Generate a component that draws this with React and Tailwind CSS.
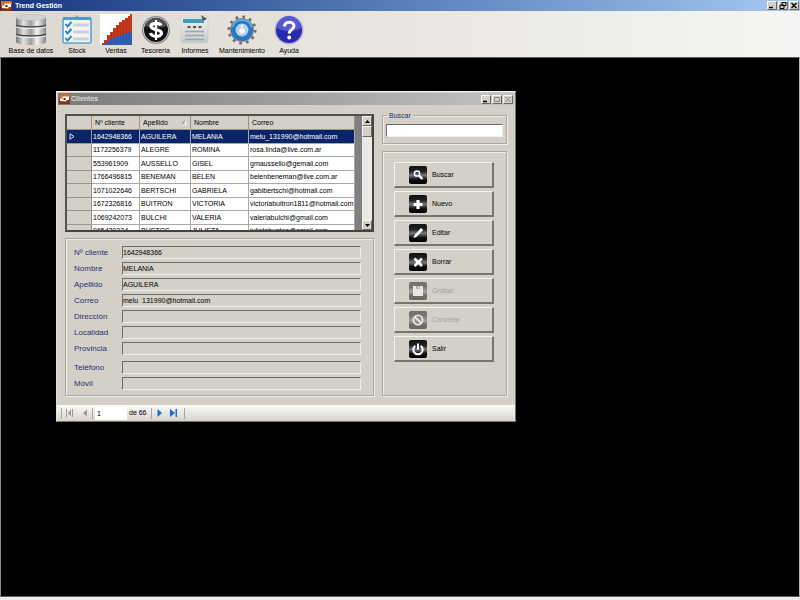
import React from "react";

const clients = [
  ["1642948366", "AGUILERA", "MELANIA", "melu_131990@hotmail.com"],
  ["1172256379", "ALEGRE", "ROMINA", "rosa.linda@live.com.ar"],
  ["553961909", "AUSSELLO", "GISEL", "gmaussello@gemail.com"],
  ["1766496815", "BENEMAN", "BELEN", "belenbeneman@live.com.ar"],
  ["1071022646", "BERTSCHI", "GABRIELA", "gabibertschi@hotmail.com"],
  ["1672326816", "BUITRON", "VICTORIA", "victoriabuitron1811@hotmail.com"],
  ["1069242073", "BULCHI", "VALERIA", "valeriabulchi@gmail.com"],
  ["965430334", "BUSTOS", "JULIETA", "julietabustos@gmail.com"],
];

const fields = [
  ["Nº cliente", "1642948366"],
  ["Nombre", "MELANIA"],
  ["Apellido", "AGUILERA"],
  ["Correo", "melu_131990@hotmail.com"],
  ["Dirección", ""],
  ["Localidad", ""],
  ["Provincia", ""],
  ["Teléfono", ""],
  ["Móvil", ""],
];

const raised = "border border-t-[#f8f7f4] border-l-[#f8f7f4] border-r-[#6b6862] border-b-[#6b6862]";

function AppLogo() {
  return (
    <svg viewBox="0 0 11 10" className="h-[10px] w-[11px] shrink-0">
      <rect width="11" height="10" fill="#d0702a" />
      <path d="M0 10V5l11-2v7z" fill="#8a3510" />
      <path d="M1 7V4.500h2.500V2.500H10v3.500H7.500v1.500z" fill="#fff" />
      <rect x="4.500" y="4" width="2" height="2" fill="#5e2208" />
    </svg>
  );
}

function CaptionButton({ label, dim, children }) {
  return (
    <button
      type="button"
      aria-label={label}
      className={`flex h-[9px] w-[10px] items-center justify-center bg-[#d4d0c8] ${raised} ${dim ? "text-[#8b8883]" : "text-black"}`}
    >
      <svg viewBox="0 0 8 7" className="h-[7px] w-[8px] shrink-0" fill="none" stroke="currentColor">
        {children}
      </svg>
    </button>
  );
}

function DatabaseIcon() {
  return (
    <svg viewBox="0 0 32 32" className="h-8 w-8">
      <defs>
        <linearGradient id="metal">
          <stop offset="0" stopColor="#777" />
          <stop offset=".25" stopColor="#e2e2e2" />
          <stop offset=".5" stopColor="#9c9c9c" />
          <stop offset=".7" stopColor="#f4f4f4" />
          <stop offset="1" stopColor="#858585" />
        </linearGradient>
      </defs>
      <path d="M1 3v25c0 4 30 4 30 0V3z" fill="url(#metal)" />
      <ellipse cx="16" cy="3.500" rx="15" ry="3" fill="#d2d2d2" stroke="#b5b5b5" strokeWidth=".5" />
      <path d="M1 11c2 2.500 28 2.500 30 0M1 20c2 2.500 28 2.500 30 0" fill="none" stroke="#444" strokeWidth="1.300" />
      <path d="M1 12.500c2 2.500 28 2.500 30 0M1 21.500c2 2.500 28 2.500 30 0" fill="none" stroke="#f5f5f5" strokeWidth="1" />
    </svg>
  );
}

function StockIcon() {
  return (
    <svg viewBox="0 0 32 32" className="h-8 w-8">
      <path d="M14 3l2-2 2 2z" fill="#aaa" />
      <rect x="2" y="4" width="28" height="25" rx="1.500" fill="#f1f5f7" stroke="#57a3cf" strokeWidth="1.600" />
      <rect x="2" y="3" width="28" height="3" fill="#4d9cca" />
      <path d="M12 11h16M12 18h16M12 25h16" stroke="#cfd2d4" strokeWidth="3" />
      <path d="M4.500 10l2 2.500 4-4.500M4.500 17l2 2.500 4-4.500M4.500 24l2 2.500 4-4.500" fill="none" stroke="#2488bd" strokeWidth="1.900" />
    </svg>
  );
}

function SalesIcon() {
  return (
    <svg viewBox="0 0 32 32" className="h-8 w-8">
      <rect width="32" height="31" fill="#fff" />
      <path d="M2 31v-2h2v-3h3v-5h3v-3h3v-4h3v-3h3V8h3V6h3V4h3V2h2V0h2v31z" fill="#c93618" />
      <path d="M2 31l5-3 6-4 8-3 6-2 5-1v13z" fill="#2a61bb" />
      <path d="M5.500 27v4M8.500 23v8M11.500 19v12M14.500 15v16M17.500 12v19M20.500 9v22M23.500 7v24M26.500 5v26M29.500 2v29" stroke="#7c2c38" strokeWidth=".6" opacity=".5" />
    </svg>
  );
}

function TreasuryIcon() {
  return (
    <svg viewBox="0 0 32 32" className="h-8 w-8">
      <circle cx="16" cy="16" r="14" fill="#8a8a8a" />
      <circle cx="16" cy="16" r="12.800" fill="#d9d9d9" />
      <circle cx="16" cy="16" r="12" fill="#111" />
      <path d="M5 12a11.500 11.500 0 0 1 22 0c-5 2-16 2-22 0z" fill="#4c4c4c" />
      <path d="M21 11.500c-1-3-10-3-10 .8 0 4.400 10.500 2.300 10.500 7 0 4-10 4-11-.3" fill="none" stroke="#fff" strokeWidth="3.200" />
      <path d="M16 6v20" stroke="#fff" strokeWidth="2.200" />
    </svg>
  );
}

function ReportsIcon() {
  return (
    <svg viewBox="0 0 32 32" className="h-8 w-8">
      <defs>
        <linearGradient id="sheet" x2="0" y2="1">
          <stop offset="0" stopColor="#eeefef" />
          <stop offset="1" stopColor="#c6c9ca" />
        </linearGradient>
      </defs>
      <rect x="2" y="4" width="27" height="25" rx="1" fill="url(#sheet)" stroke="#c9cacb" strokeWidth=".6" />
      <rect x="4" y="5" width="21" height="4" fill="#3f9cba" />
      <path d="M22 1l6 4-4 2z" fill="#555" />
      <path d="M8.500 13h3M14 13h3M19.500 13h3" stroke="#555" strokeWidth="1.800" />
      <path d="M6 17.500h19M6 21.500h19M6 25.500h19" stroke="#a0a4a6" strokeWidth="1.300" />
    </svg>
  );
}

function MaintenanceIcon() {
  return (
    <svg viewBox="0 0 32 32" className="h-8 w-8">
      <circle cx="16" cy="16" r="13" fill="none" stroke="#6f6b66" strokeWidth="3" strokeDasharray="2.600 4.206" />
      <circle cx="16" cy="16" r="12" fill="#8a9196" />
      <circle cx="16" cy="16" r="11" fill="#2479c0" />
      <path d="M6.500 13a10 10 0 0 1 19 0" fill="none" stroke="#69b5ea" strokeWidth="1.500" />
      <circle cx="16" cy="16" r="6.500" fill="#b5d3ea" />
      <path d="M16 10l2.500 5h-5z" fill="#fff" />
      <circle cx="16" cy="17" r="3.600" fill="#f7fafc" stroke="#8fb4cd" strokeWidth=".7" />
    </svg>
  );
}

function HelpIcon() {
  return (
    <svg viewBox="0 0 32 32" className="h-8 w-8">
      <circle cx="16" cy="16" r="14.500" fill="#aeb0dc" />
      <circle cx="16" cy="16" r="13" fill="#2a2ab0" />
      <path d="M4 14a12 12 0 0 1 24 0c-6 4-18 4-24 0z" fill="#5658cf" />
      <path d="M11.500 12.500c0-6 9.500-5.500 9.500-.5 0 3.500-4.800 3.500-4.800 7.500" fill="none" stroke="#fff" strokeWidth="3" />
      <circle cx="16.200" cy="23.500" r="1.900" fill="#fff" />
    </svg>
  );
}

const tools = [
  ["Base de datos", DatabaseIcon, "w-[46px]"],
  ["Stock", StockIcon, "w-[46px]"],
  ["Ventas", SalesIcon, "w-8"],
  ["Tesoreria", TreasuryIcon, "w-[47px]"],
  ["Informes", ReportsIcon, "w-8"],
  ["Mantenimiento", MaintenanceIcon, "w-[62px]"],
  ["Ayuda", HelpIcon, "w-8"],
];

const glyphs = {
  Buscar: (
    <g fill="none" stroke="#fff">
      <circle cx="8" cy="7.500" r="2.600" strokeWidth="1.500" />
      <path d="M10 9.500l3.500 3.500" strokeWidth="2.200" />
    </g>
  ),
  Nuevo: <path d="M9 5v9M4.500 9.500h9" stroke="#fff" strokeWidth="3.200" />,
  Editar: <path d="M4.500 14l1-3 6.500-7 2.200 2-6.700 7z" fill="#fff" />,
  Borrar: <path d="M5.500 5.500l7.500 7.500M13 5.500L5.500 13" stroke="#fff" strokeWidth="2.600" />,
  Grabar: (
    <g>
      <path d="M4 4h9l1 1v9H4z" fill="#fff" />
      <path d="M7 4h4v3H7z" fill="#8b8b8b" />
      <path d="M9 4.500h1v2H9z" fill="#fff" />
    </g>
  ),
  Cancelar: (
    <g fill="none" stroke="#fff" strokeWidth="1.800">
      <circle cx="9" cy="9" r="4.600" />
      <path d="M6 6l6 6" />
    </g>
  ),
  Salir: (
    <g fill="none" stroke="#fff" strokeWidth="2">
      <path d="M6.300 5.800a4.700 4.700 0 1 0 5.400 0M9 3.500v6" />
    </g>
  ),
};

function ActionButton({ label, disabled }) {
  return (
    <button
      type="button"
      disabled={disabled}
      className="flex h-[26px] items-center gap-[5px] border border-t-[#f4f2ee] border-l-[#f4f2ee] border-r-2 border-b-2 border-r-[#77736d] border-b-[#77736d] bg-[#d4d0c8] pl-[14px] text-black disabled:text-[#a5a29c]"
    >
      <svg viewBox="0 0 18 18" className={disabled ? "h-[18px] w-[18px] opacity-50" : "h-[18px] w-[18px]"}>
        <defs>
          <linearGradient id={`face-${label}`} x2="0" y2="1">
            <stop offset="0" stopColor="#111" />
            <stop offset=".3" stopColor="#222" />
            <stop offset=".52" stopColor="#777" />
            <stop offset=".75" stopColor="#111" />
            <stop offset="1" stopColor="#000" />
          </linearGradient>
        </defs>
        <rect width="18" height="18" rx="2" fill={`url(#face-${label})`} />
        {glyphs[label]}
      </svg>
      <span>{label}</span>
    </button>
  );
}

function ClientTable() {
  const head = "h-[14px] border-r border-b border-[#98958f] bg-[#d4d0c8] p-0 pl-[3px] text-left font-normal";
  return (
    <div className="flex h-[118px] border-2 border-t-[#55524e] border-l-[#55524e] border-r-[#45423f] border-b-[#45423f] bg-[#808080]">
      <div className="flex-1 overflow-hidden">
        <table className="w-[288px] table-fixed border-separate border-spacing-0 bg-white leading-[12px]">
          <colgroup>
            <col className="w-[25px]" />
            <col className="w-[48px]" />
            <col className="w-[51px]" />
            <col className="w-[58px]" />
            <col className="w-[106px]" />
          </colgroup>
          <thead>
            <tr>
              <th className={head} aria-label="Fila" />
              <th className={head}>Nº cliente</th>
              <th className={head}>
                <span className="flex items-center justify-between pr-[3px]">
                  Apellido
                  <svg viewBox="0 0 5 5" className="h-[5px] w-[5px]">
                    <path d="M0 5l3-5" stroke="#88857f" />
                    <path d="M3 0l1.500 5H0" fill="none" stroke="#f5f3ef" />
                  </svg>
                </span>
              </th>
              <th className={head}>Nombre</th>
              <th className={head}>Correo</th>
            </tr>
          </thead>
          <tbody>
            {clients.map((row, i) => (
              <tr key={row[0]} className={i === 0 ? "h-[14px] bg-[#0a246a] text-white" : "h-[14px] even:h-[13px]"}>
                <td className={`border-r border-b border-[#98958f] p-0 pl-[2px] ${i === 0 ? "" : "bg-[#d4d0c8]"}`}>
                  {i === 0 && (
                    <svg viewBox="0 0 6 7" className="block h-[7px] w-[6px]">
                      <path d="M1 .8L5 3.500 1 6.200z" fill="none" stroke="#dfe2ea" />
                    </svg>
                  )}
                </td>
                {row.map((cell) => (
                  <td key={cell} className="border-r border-b border-[#a9a9a9] p-0 pl-px whitespace-nowrap">
                    {cell}
                  </td>
                ))}
              </tr>
            ))}
          </tbody>
        </table>
      </div>
      <div className="flex w-[10px] flex-col bg-[#ebe9e5]">
        <button type="button" aria-label="Subir" className={`flex h-[10px] items-center justify-center bg-[#d4d0c8] ${raised}`}>
          <svg viewBox="0 0 5 3" className="h-[3px] w-[5px]"><path d="M0 3L2.500 0 5 3z" /></svg>
        </button>
        <div className={`h-[11px] bg-[#d4d0c8] ${raised}`} />
        <div className="flex-1" />
        <button type="button" aria-label="Bajar" className={`flex h-[10px] items-center justify-center bg-[#d4d0c8] ${raised}`}>
          <svg viewBox="0 0 5 3" className="h-[3px] w-[5px]"><path d="M0 0h5L2.500 3z" /></svg>
        </button>
      </div>
    </div>
  );
}

const sunken = "border border-t-[#6f6c67] border-l-[#6f6c67] border-r-[#f1efeb] border-b-[#f1efeb]";
const group = "border border-[#aaa7a0] shadow-[1px_1px_0_#efede9,inset_1px_1px_0_#efede9]";

function Navigator() {
  const divider = "h-[11px] w-px bg-[#aaa7a0]";
  return (
    <nav className="flex h-4 items-center bg-gradient-to-b from-[#fafaf8] to-[#d6d4cb] pl-1">
      <span className={divider} />
      <button type="button" aria-label="Primero" disabled className="ml-1 text-[#9d9a95]">
        <svg viewBox="0 0 8 8" className="h-2 w-2" fill="currentColor"><path d="M0 0h1v8H0zM5 .5v7L2 4zM6 0h1v8H6z" /></svg>
      </button>
      <button type="button" aria-label="Anterior" disabled className="ml-2 text-[#9d9a95]">
        <svg viewBox="0 0 8 8" className="h-2 w-2" fill="currentColor"><path d="M5 .5v7L1 4z" /></svg>
      </button>
      <span className={`${divider} ml-[2px]`} />
      <input aria-label="Posición" defaultValue="1" className="ml-[2px] h-[13px] w-8 bg-white pl-[2px]" />
      <span className="ml-[2px] w-[22px]">de 66</span>
      <span className={divider} />
      <button type="button" aria-label="Siguiente" className="ml-1 text-[#1f66d8]">
        <svg viewBox="0 0 8 8" className="h-2 w-2" fill="currentColor"><path d="M1.500 0v8L6 4z" /></svg>
      </button>
      <button type="button" aria-label="Último" className="ml-[6px] text-[#1f66d8]">
        <svg viewBox="0 0 8 8" className="h-2 w-2" fill="currentColor"><path d="M0 0v8l5-4zM5.500 0H7v8H5.500z" /></svg>
      </button>
      <span className={`${divider} ml-[6px]`} />
    </nav>
  );
}

function ClientsWindow() {
  return (
    <section className="absolute top-[33px] left-[55px] w-[460px] border border-t-[#f3f1ed] border-l-[#e4e1dc] border-r-[#77736d] border-b-[#77736d] bg-[#d4d0c8]">
      <header className="mx-px mt-px flex h-3 items-center justify-between bg-gradient-to-r from-[#7b7b7b] to-[#c3c3c3] px-px">
        <h2 className="flex items-center gap-px font-bold text-[#dedbd5]">
          <AppLogo />
          Clientes
        </h2>
        <div className="flex gap-px">
          <CaptionButton label="Minimizar"><path d="M1 5.500h4" strokeWidth="1.500" /></CaptionButton>
          <CaptionButton label="Maximizar" dim><path d="M1.500 1.500h5v4h-5z" /></CaptionButton>
          <CaptionButton label="Cerrar" dim><path d="M1.500 1l5 5M6.500 1l-5 5" /></CaptionButton>
        </div>
      </header>
      <div className="flex gap-2 px-2 pt-[9px] pb-[9px]">
        <div className="flex flex-1 flex-col gap-[6px]">
          <ClientTable />
          <div className={`flex flex-1 flex-col gap-[3px] px-2 pt-[7px] text-[8px] text-[#26306e] ${group}`}>
            {fields.map(([label, value]) => (
              <div key={label} className={label === "Teléfono" ? "mt-[3px] flex h-[13px] items-center" : "flex h-[13px] items-center"}>
                <label htmlFor={label} className="w-12">{label}</label>
                <input
                  id={label}
                  readOnly
                  defaultValue={value}
                  className={`mr-1 h-[13px] min-w-0 flex-1 bg-[#d4d0c8] text-[7px] leading-[11px] text-black ${sunken}`}
                />
              </div>
            ))}
          </div>
        </div>
        <div className="flex w-[125px] flex-col gap-[7px]">
          <fieldset className={`h-[30px] px-[3px] ${group}`}>
            <legend className="ml-px bg-[#d4d0c8] px-[2px] leading-[3px] text-[#26306e]">
              <label htmlFor="search">Buscar</label>
            </legend>
            <input id="search" type="text" className={`mt-[7px] block h-[13px] w-full bg-white px-1 ${sunken}`} />
          </fieldset>
          <div className={`flex h-[245px] flex-col gap-[3px] pt-[10px] pr-3 pl-[11px] ${group}`}>
            <ActionButton label="Buscar" />
            <ActionButton label="Nuevo" />
            <ActionButton label="Editar" />
            <ActionButton label="Borrar" />
            <ActionButton label="Grabar" disabled />
            <ActionButton label="Cancelar" disabled />
            <ActionButton label="Salir" />
          </div>
        </div>
      </div>
      <Navigator />
    </section>
  );
}

export default function App() {
  return (
    <div className="flex min-h-screen flex-col bg-[#f0eeeb] font-['Liberation_Sans',Arial,sans-serif] text-[7px] leading-[10px] text-black">
      <header className="flex h-[11px] items-center justify-between bg-gradient-to-r from-[#17357f] to-[#a6caf0] px-px">
        <h1 className="flex items-center gap-[3px] font-bold text-white">
          <AppLogo />
          Trend Gestión
        </h1>
        <div className="flex gap-px">
          <CaptionButton label="Minimizar"><path d="M1 5.500h4" strokeWidth="1.500" /></CaptionButton>
          <CaptionButton label="Restaurar"><path d="M3 .5h4v3H3zM1 3h4v3.500H1z" /></CaptionButton>
          <CaptionButton label="Cerrar"><path d="M1.500 1l5 5M6.500 1l-5 5" strokeWidth="1.300" /></CaptionButton>
        </div>
      </header>
      <div className="flex h-[46px] bg-gradient-to-r from-[#dcd8d0] to-[#f6f5f3] pt-[3px] pl-2">
        {tools.map(([label, Icon, width]) => (
          <button key={label} type="button" className={`flex flex-col items-center ${width}`}>
            <Icon />
            <span className="whitespace-nowrap">{label}</span>
          </button>
        ))}
      </div>
      <main className="relative mb-[3px] flex-1 border border-t-[#5e5e5e] border-r-[#b5b5b5] border-b-[#5e5e5e] border-l-[#8a8a8a] bg-black">
        <ClientsWindow />
      </main>
    </div>
  );
}
